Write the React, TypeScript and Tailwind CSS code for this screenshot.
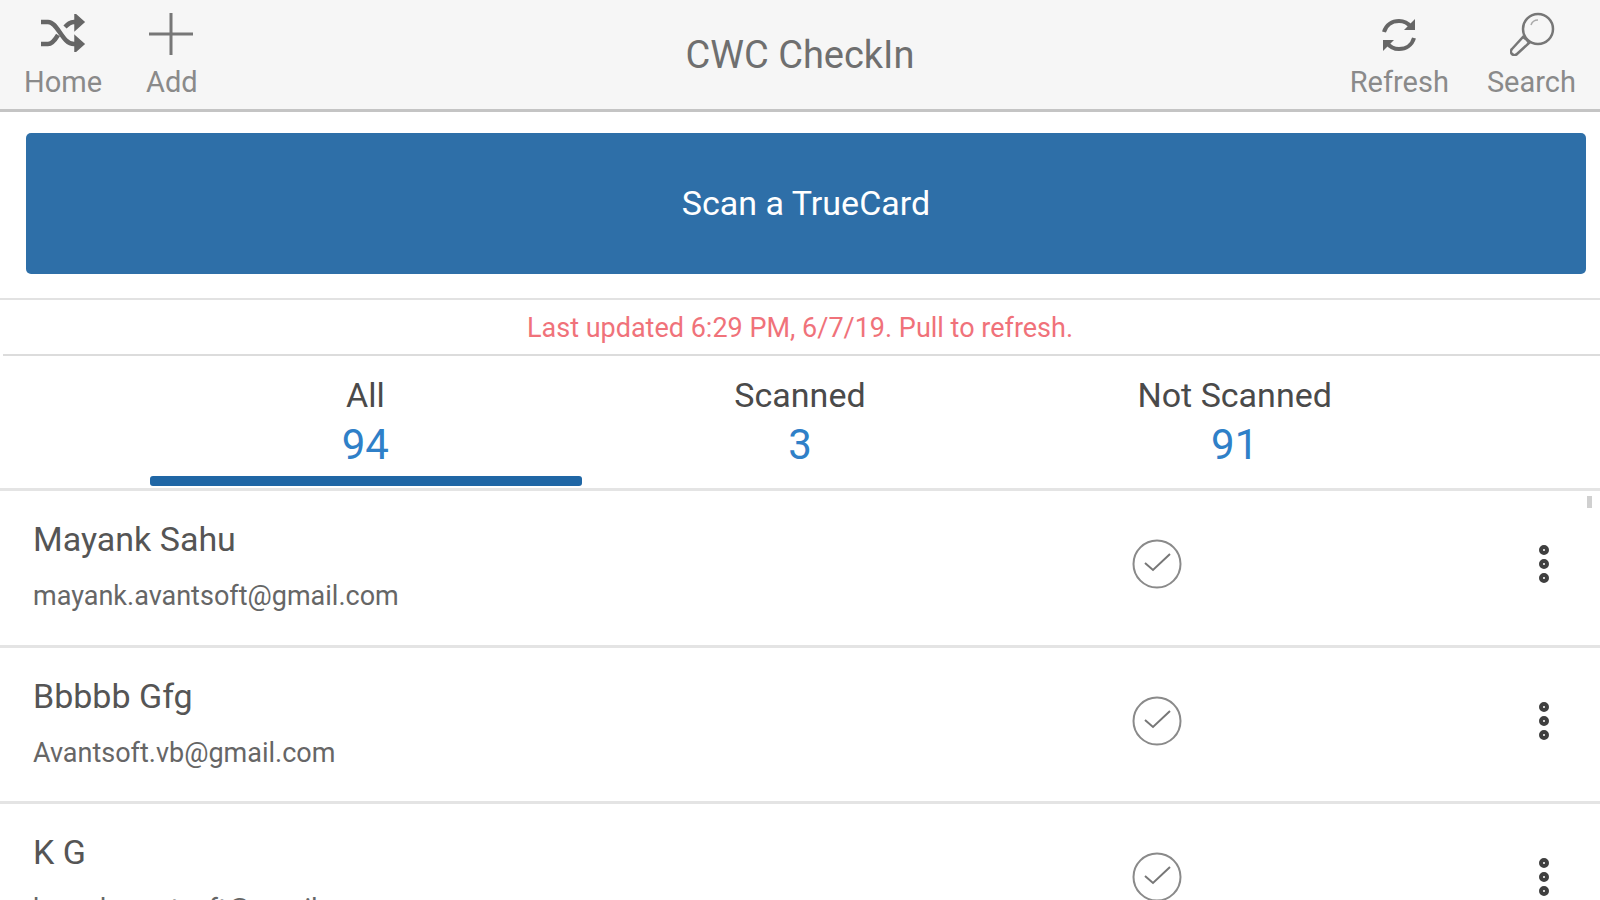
import type { ReactNode } from "react";
import { MoreVertical } from "lucide-react";

const roboto = "font-['Roboto',sans-serif]";

const people = [
  { name: "Mayank Sahu", email: "mayank.avantsoft@gmail.com" },
  { name: "Bbbbb Gfg", email: "Avantsoft.vb@gmail.com" },
  { name: "K G", email: "kamal.avantsoft@gmail.com" },
];

const tabs = [
  { label: "All", count: "94", active: true },
  { label: "Scanned", count: "3", active: false },
  { label: "Not Scanned", count: "91", active: false },
];

function ShuffleIcon() {
  return (
    <svg width="46" height="38" viewBox="0 0 46 38" fill="none" stroke="#666666" strokeWidth="4.5">
      <path d="M1 8h7c10 0 14 22 26 22h5" />
      <path d="M1 30h7c4 0 7-4 10-9M25 13c3-3 5-5 9-5h5" />
      <path d="M35 0l9 8-9 8z" fill="#666666" strokeWidth="1.5" />
      <path d="M35 22l9 8-9 8z" fill="#666666" strokeWidth="1.5" />
    </svg>
  );
}

function PlusIcon() {
  return (
    <svg width="44" height="42" viewBox="0 0 44 42" fill="none" stroke="#777777" strokeWidth="3" className="-ml-[2px] mt-[1px]">
      <path d="M22 0v42M0 21h44" />
    </svg>
  );
}

function RefreshIcon() {
  return (
    <svg width="36" height="36" viewBox="0 0 36 36" fill="none" stroke="#666666" strokeWidth="4" className="mt-[4px]">
      <path d="M3 15C5 8 11 4 18 4c5 0 9 2 12 6" />
      <path d="M33 21c-2 7-8 11-15 11-5 0-9-2-12-6" />
      <path d="M34 2v11H23z" fill="#666666" stroke="none" />
      <path d="M2 34V23h11z" fill="#666666" stroke="none" />
    </svg>
  );
}

function SearchIcon() {
  return (
    <svg width="46" height="44" viewBox="0 0 46 44" fill="none" stroke="#777777" strokeWidth="2.5" className="ml-[4px] mt-[1px]">
      <circle cx="28" cy="17" r="15" />
      <path d="M17 28l-4-3-11 12a3 3 0 0 0 5 5l12-11z" />
      <path d="M21 13c1-3 4-5 7-5" strokeWidth="1.5" stroke="#aaaaaa" />
    </svg>
  );
}

function CheckCircle() {
  return (
    <svg width="50" height="50" viewBox="0 0 50 50" fill="none" stroke="#8a8a8a" strokeWidth="2">
      <circle cx="25" cy="25" r="23.5" />
      <path d="M13 24l8 7 17-16" stroke="#777777" />
    </svg>
  );
}

function ToolbarItem({ label, icon }: { label: string; icon: ReactNode }) {
  return (
    <div className="flex flex-col items-center">
      <div className="flex h-[62px] items-center pb-[6px]">{icon}</div>
      <span className="text-[29px] leading-[30px] text-[#8a8a8a]">{label}</span>
    </div>
  );
}

export default function App() {
  return (
    <div className={`relative h-[900px] w-full overflow-hidden bg-white ${roboto}`}>
      <header className="grid h-[112px] grid-cols-3 items-start border-b-[3px] border-[#c4c4c4] bg-[#f6f6f6] pl-[24px] pr-[24px] pt-[5px]">
        <div className="flex gap-[44px]">
          <ToolbarItem label="Home" icon={<ShuffleIcon />} />
          <ToolbarItem label="Add" icon={<PlusIcon />} />
        </div>
        <div className="pt-[29px] text-center text-[38px] leading-[42px] text-[#6f6f6f]">
          CWC CheckIn
        </div>
        <div className="flex justify-end gap-[38px]">
          <ToolbarItem label="Refresh" icon={<RefreshIcon />} />
          <ToolbarItem label="Search" icon={<SearchIcon />} />
        </div>
      </header>

      <div className="px-[26px] pt-[21px]">
        <button className="flex h-[141px] w-[1560px] items-center justify-center rounded-[5px] bg-[#2e6fa8] text-[34px] text-white">
          Scan a TrueCard
        </button>
      </div>

      <div className="mt-[24px] border-t-[2px] border-[#e2e2e2]">
        <p className="flex h-[54px] items-center justify-center pt-[3px] text-[27px] text-[#f0727a]">
          Last updated 6:29 PM, 6/7/19. Pull to refresh.
        </p>
      </div>

      <div className="ml-[3px] border-t-[2px] border-[#dcdcdc]" />

      <div className="border-b-[3px] border-[#e4e4e4] px-[148px]">
        <div className="grid grid-cols-3">
          {tabs.map((tab) => (
            <div key={tab.label} className="flex h-[132px] flex-col items-center pt-[20px]">
              <span className="text-[34px] leading-[38px] text-[#4a4a4a]">{tab.label}</span>
              <span className="mt-[6px] text-[42px] leading-[50px] text-[#2f80c8]">{tab.count}</span>
              {tab.active && (
                <div className="ml-[1px] mt-[6px] h-[10px] w-[432px] shrink-0 rounded-[3px] bg-[#1f66a5]" />
              )}
            </div>
          ))}
        </div>
      </div>

      <div className="absolute right-[8px] top-[496px] h-[12px] w-[5px] bg-[#d0d0d0]" />

      <ul>
        {people.map((person) => (
          <li
            key={person.name}
            className="flex h-[156.5px] items-center border-b-[3px] border-[#e4e4e4] pb-[7px] pl-[33px] pr-[36px]"
          >
            <div className="flex-1 self-start pt-[28px]">
              <div className="text-[34px] leading-[40px] text-[#555555]">{person.name}</div>
              <div className="mt-[22px] text-[27px] leading-[30px] text-[#666666]">{person.email}</div>
            </div>
            <div className="mr-[338px]">
              <CheckCircle />
            </div>
            <MoreVertical size={48} strokeWidth={3} color="#3f3f3f" className="-mr-[4px]" />
          </li>
        ))}
      </ul>
    </div>
  );
}
